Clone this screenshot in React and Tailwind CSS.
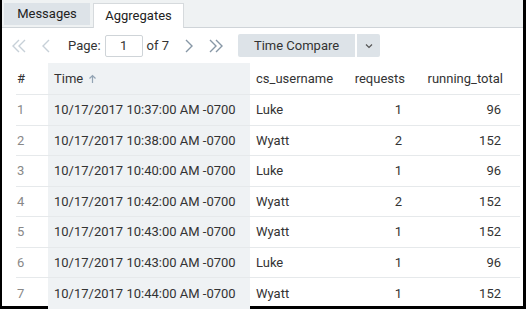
import React from 'react';

const rows = [
  [1, '10/17/2017 10:37:00 AM -0700', 'Luke', 1, 96],
  [2, '10/17/2017 10:38:00 AM -0700', 'Wyatt', 2, 152],
  [3, '10/17/2017 10:40:00 AM -0700', 'Luke', 1, 96],
  [4, '10/17/2017 10:42:00 AM -0700', 'Wyatt', 2, 152],
  [5, '10/17/2017 10:43:00 AM -0700', 'Wyatt', 1, 152],
  [6, '10/17/2017 10:43:00 AM -0700', 'Luke', 1, 96],
  [7, '10/17/2017 10:44:00 AM -0700', 'Wyatt', 1, 152],
];

const Chevron = ({ double, dir = 'left', color }) => (
  <svg width="18" height="18" viewBox="0 0 18 18" fill="none" stroke={color} strokeWidth="1.4">
    {dir === 'left' ? (
      double ? (
        <>
          <path d="M9 3 L3 9 L9 15" />
          <path d="M15 3 L9 9 L15 15" />
        </>
      ) : (
        <path d="M12 3 L6 9 L12 15" />
      )
    ) : double ? (
      <>
        <path d="M3 3 L9 9 L3 15" />
        <path d="M9 3 L15 9 L9 15" />
      </>
    ) : (
      <path d="M6 3 L12 9 L6 15" />
    )}
  </svg>
);

export default function App() {
  return (
    <div
      className="w-[526px] h-[309px] bg-black overflow-hidden pl-[2px] pr-[3px] pb-[3px]"
      style={{ fontFamily: 'Roboto, "Liberation Sans", sans-serif' }}
    >
      <div className="bg-white h-full flex flex-col">
        <div className="h-[28px] bg-[#eff2f3] border-b border-[#cfd4d8] flex items-end pl-[2px] gap-[3px] shrink-0">
          <div className="h-[22px] mb-[2px] w-[86px] bg-[#dde3e8] flex items-center justify-center text-[13px] text-[#222]">
            Messages
          </div>
          <div className="h-[25px] -mb-px w-[91px] bg-white border border-b-0 border-[#d6dadd] flex items-center justify-center text-[13px] text-[#222]">
            Aggregates
          </div>
        </div>

        <div className="h-[35px] flex items-center pl-[8px] shrink-0 text-[13px] text-[#333]">
          <Chevron double color="#c7d0d8" />
          <div className="ml-[9px]"><Chevron color="#c7d0d8" /></div>
          <span className="ml-[13px]">Page:</span>
          <div className="ml-[4px] w-[38px] h-[22px] border border-[#cfd4d8] rounded-[2px] flex items-center justify-center">1</div>
          <span className="ml-[4px]">of 7</span>
          <div className="ml-[11px]"><Chevron dir="right" color="#8797a6" /></div>
          <div className="ml-[9px]"><Chevron dir="right" double color="#8797a6" /></div>
          <div className="ml-[13px] h-[23px] w-[117px] bg-[#dde3e8] rounded-l-[2px] flex items-center justify-center text-[#333]">
            Time Compare
          </div>
          <div className="ml-[2px] h-[23px] w-[23px] bg-[#dde3e8] rounded-r-[2px] flex items-center justify-center">
            <svg width="10" height="10" viewBox="0 0 10 10" fill="none" stroke="#555" strokeWidth="1.2">
              <path d="M2 3.5 L5 6.5 L8 3.5" />
            </svg>
          </div>
        </div>

        <div className="flex-1 pl-[14px] pr-[3px] text-[13px] text-[#333]">
          <div className="grid grid-cols-[32px_202px_92px_63px_1fr]">
            <div className="h-[32px] flex items-center pl-[1px] border-b border-[#e6e9eb]">#</div>
            <div className="h-[32px] flex items-center pl-[6px] bg-[#eff2f4] border-b border-[#e6e9eb]">
              Time
              <svg className="ml-[5px]" width="9" height="10" viewBox="0 0 9 10" fill="none" stroke="#93a4b4" strokeWidth="1.2">
                <path d="M4.5 9 V1.5 M1.5 4.5 L4.5 1.5 L7.5 4.5" />
              </svg>
            </div>
            <div className="h-[32px] flex items-center pl-[6px] border-b border-[#e6e9eb]">cs_username</div>
            <div className="h-[32px] flex items-center justify-end border-b border-[#e6e9eb]">requests</div>
            <div className="h-[32px] flex items-center justify-end border-b border-[#e6e9eb] pr-[17px]">running_total</div>
            {rows.map(([n, t, u, r, tot], i) => {
              const b = i < rows.length - 1 ? 'border-b border-[#e6e9eb]' : '';
              return (
                <React.Fragment key={n}>
                  <div className={`h-[30.5px] flex items-center pl-[1px] text-[#888] ${b}`}>{n}</div>
                  <div className={`h-[30.5px] flex items-center pl-[6px] bg-[#eff2f4] ${b}`}>{t}</div>
                  <div className={`h-[30.5px] flex items-center pl-[6px] ${b}`}>{u}</div>
                  <div className={`h-[30.5px] flex items-center justify-end pr-[3px] ${b}`}>{r}</div>
                  <div className={`h-[30.5px] flex items-center justify-end pr-[19px] ${b}`}>{tot}</div>
                </React.Fragment>
              );
            })}
          </div>
        </div>
      </div>
    </div>
  );
}
